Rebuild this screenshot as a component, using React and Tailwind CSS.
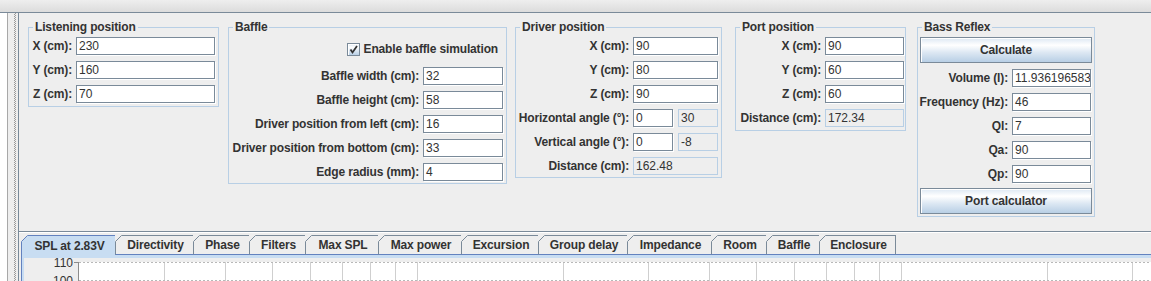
import clsx from 'clsx';

function Label({ children }) {
  return (
    <span className="text-[12px] font-bold tracking-[-0.15px] text-[#333333] whitespace-nowrap leading-[14px]">
      {children}
    </span>
  );
}

function Field({ value, w, ro }) {
  return (
    <div
      className={clsx(
        'h-[18px] shrink-0 flex items-center pl-[2px] overflow-hidden whitespace-nowrap text-[12px] leading-[14px] text-[#333333]',
        ro ? 'bg-[#eeeeee] border border-[#b8cfe5]' : 'bg-white border border-[#7a8a99] shadow-[1px_1px_0_#ffffff]',
        w
      )}
    >
      {value}
    </div>
  );
}

function Row({ label, children }) {
  return (
    <div className="flex items-center justify-end gap-[4px] h-[18px]">
      <Label>{label}</Label>
      {children}
    </div>
  );
}

function Group({ title, className, children }) {
  return (
    <fieldset className={clsx('border border-[#b8cfe5] shrink-0 min-w-0', className)}>
      <legend className="ml-[4px] px-[2px] h-[15px] leading-[15px] text-[12px] font-bold tracking-[-0.15px] text-[#333333] whitespace-nowrap">
        {title}
      </legend>
      {children}
    </fieldset>
  );
}

function Button({ children }) {
  return (
    <div className="h-[26px] flex items-center justify-center border border-[#7a8a99] shadow-[inset_1px_1px_0_#ffffff] bg-[linear-gradient(to_bottom,#dde8f3_0%,#ffffff_30%,#dde8f3_60%,#b8cfe5_100%)] text-[12px] font-bold tracking-[-0.15px] text-[#333333]">
      {children}
    </div>
  );
}

function CheckBox() {
  return (
    <div className="w-[13px] h-[13px] shrink-0 border border-[#7a8a99] shadow-[inset_1px_1px_0_#ffffff] bg-[linear-gradient(to_bottom,#dde8f3_0%,#ffffff_30%,#dde8f3_60%,#b8cfe5_100%)] flex items-center justify-center">
      <svg width="11" height="11" viewBox="0 0 11 11">
        <path d="M2.5 5.5L4.5 8.5L9 2" fill="none" stroke="#333333" strokeWidth="1.8" />
      </svg>
    </div>
  );
}

const TABS = [
  ['SPL at 2.83V', 'w-[94px]'],
  ['Directivity', 'w-[78px]'],
  ['Phase', 'w-[56px]'],
  ['Filters', 'w-[56px]'],
  ['Max SPL', 'w-[73px]'],
  ['Max power', 'w-[83px]'],
  ['Excursion', 'w-[77px]'],
  ['Group delay', 'w-[89px]'],
  ['Impedance', 'w-[84px]'],
  ['Room', 'w-[55px]'],
  ['Baffle', 'w-[53px]'],
  ['Enclosure', 'w-[77px]'],
];

function Tab({ label, w, selected, last }) {
  return (
    <div
      className={clsx(
        'relative shrink-0 h-[20px] flex items-center justify-center pl-[2px] text-[12px] font-bold tracking-[-0.15px] text-[#333333] whitespace-nowrap border-t border-l',
        selected ? 'bg-[#c8ddf2] border-[#6382bf]' : 'bg-[#eeeeee] border-[#7a8a99] border-b border-b-[#6382bf]',
        last && 'border-r',
        w
      )}
    >
      <svg className="absolute -left-px -top-px" width="7" height="7">
        <path d="M0 0H7L0 7Z" fill="#eeeeee" />
        <path d="M0.5 6.5L6.5 0.5" stroke={selected ? '#6382bf' : '#7a8a99'} />
      </svg>
      {label}
    </div>
  );
}

// log frequency grid, 20 Hz sits on the axis
const FREQS = [30, 40, 50, 60, 70, 80, 90, 100, 200, 300, 400, 500, 600, 700, 800, 900, 1000, 2000, 3000];
const fx = (f) => Math.round(55 + 484 * Math.log10(f / 20)) + 0.5;

function Chart() {
  return (
    <svg width="1127" height="23" className="block">
      <rect x="55" y="4" width="1072" height="19" fill="#ffffff" />
      {FREQS.map((f) => (
        <line key={f} x1={fx(f)} x2={fx(f)} y1="4" y2="23" stroke="#cfcfcf" />
      ))}
      <line x1="55" x2="1127" y1="4.5" y2="4.5" stroke="#b8b8b8" strokeDasharray="2 2" />
      <line x1="55" x2="1127" y1="22.5" y2="22.5" stroke="#b8b8b8" strokeDasharray="2 2" />
      <line x1="54.5" x2="54.5" y1="4" y2="23" stroke="#8c8c8c" />
      <line x1="50" x2="54" y1="4.5" y2="4.5" stroke="#8c8c8c" />
      <text x="49" y="9" textAnchor="end" fontSize="12" fill="#333333" fontFamily="Liberation Sans, Arial, sans-serif">
        110
      </text>
      <text x="49" y="27" textAnchor="end" fontSize="12" fill="#333333" fontFamily="Liberation Sans, Arial, sans-serif">
        100
      </text>
    </svg>
  );
}

export default function App() {
  return (
    <div className="w-[1151px] h-[281px] overflow-hidden bg-[#eeeeee] font-['Liberation_Sans',Arial,sans-serif] flex flex-col">
      <div className="h-[12px] shrink-0 bg-linear-to-b from-[#eeeeee] to-[#dcdcdc]" />
      <div className="flex flex-1 min-h-0 border-t border-[#7a8a99]">
        <div className="w-[8px] shrink-0 bg-white border-r border-[#a8a8a8]" />
        <div className="w-[10px] shrink-0 pl-[6px]">
          <div className="w-[2px] h-full bg-[conic-gradient(#9a9a9a_25%,transparent_0_50%,#9a9a9a_0_75%,transparent_0)] bg-[length:2px_2px]" />
        </div>
        <div className="flex-1 min-w-0 flex flex-col border-l border-[#7a8a99]">
          {/* settings panel */}
          <div className="h-[218px] shrink-0 flex items-start pt-[7px] pl-[9px]">
            <Group title="Listening position" className="w-[191px] h-[87px]">
              <div className="flex flex-col gap-[6px] pt-[2px] pr-[3px]">
                <Row label="X (cm):"><Field w="w-[139px]" value="230" /></Row>
                <Row label="Y (cm):"><Field w="w-[139px]" value="160" /></Row>
                <Row label="Z (cm):"><Field w="w-[139px]" value="70" /></Row>
              </div>
            </Group>

            <Group title="Baffle" className="w-[279px] h-[164px] ml-[9px]">
              <div className="flex flex-col pr-[3px]">
                <div className="flex items-center justify-end gap-[4px] h-[18px] mt-[5px] pr-[5px]">
                  <CheckBox />
                  <Label>Enable baffle simulation</Label>
                </div>
                <div className="flex flex-col gap-[6px] mt-[9px]">
                  <Row label="Baffle width (cm):"><Field w="w-[80px]" value="32" /></Row>
                  <Row label="Baffle height (cm):"><Field w="w-[80px]" value="58" /></Row>
                  <Row label="Driver position from left (cm):"><Field w="w-[80px]" value="16" /></Row>
                  <Row label="Driver position from bottom (cm):"><Field w="w-[80px]" value="33" /></Row>
                  <Row label="Edge radius (mm):"><Field w="w-[80px]" value="4" /></Row>
                </div>
              </div>
            </Group>

            <Group title="Driver position" className="w-[207px] h-[158px] ml-[8px]">
              <div className="flex flex-col gap-[6px] pt-[2px] pr-[3px]">
                <Row label="X (cm):"><Field w="w-[85px]" value="90" /></Row>
                <Row label="Y (cm):"><Field w="w-[85px]" value="80" /></Row>
                <Row label="Z (cm):"><Field w="w-[85px]" value="90" /></Row>
                <Row label="Horizontal angle (°):">
                  <div className="flex gap-[5px]">
                    <Field w="w-[40px]" value="0" />
                    <Field w="w-[40px]" value="30" ro />
                  </div>
                </Row>
                <Row label="Vertical angle (°):">
                  <div className="flex gap-[5px]">
                    <Field w="w-[40px]" value="0" />
                    <Field w="w-[40px]" value="-8" ro />
                  </div>
                </Row>
                <Row label="Distance (cm):"><Field w="w-[85px]" value="162.48" ro /></Row>
              </div>
            </Group>

            <Group title="Port position" className="w-[171px] h-[111px] ml-[13px]">
              <div className="flex flex-col gap-[6px] pt-[2px] pr-[1px]">
                <Row label="X (cm):"><Field w="w-[79px]" value="90" /></Row>
                <Row label="Y (cm):"><Field w="w-[79px]" value="60" /></Row>
                <Row label="Z (cm):"><Field w="w-[79px]" value="60" /></Row>
                <Row label="Distance (cm):"><Field w="w-[79px]" value="172.34" ro /></Row>
              </div>
            </Group>

            <Group title="Bass Reflex" className="w-[178px] h-[197px] ml-[11px]">
              <div className="flex flex-col pt-[2px] px-[2px]">
                <Button>Calculate</Button>
                <div className="flex flex-col gap-[6px] mt-[6px] pr-[1px]">
                  <Row label="Volume (l):"><Field w="w-[79px]" value="11.93619658306" /></Row>
                  <Row label="Frequency (Hz):"><Field w="w-[79px]" value="46" /></Row>
                  <Row label="Ql:"><Field w="w-[79px]" value="7" /></Row>
                  <Row label="Qa:"><Field w="w-[79px]" value="90" /></Row>
                  <Row label="Qp:"><Field w="w-[79px]" value="90" /></Row>
                </div>
                <div className="mt-[5px]">
                  <Button>Port calculator</Button>
                </div>
              </div>
            </Group>
          </div>

          {/* graphs */}
          <div className="flex-1 min-h-0 flex flex-col border-t border-[#7a8a99] shadow-[inset_0_1px_0_#ffffff] pt-[3px] pl-[2px]">
            <div className="flex h-[20px] shrink-0">
              {TABS.map(([label, w], i) => (
                <Tab key={label} label={label} w={w} selected={i === 0} last={i === TABS.length - 1} />
              ))}
              <div className="flex-1 border-b border-[#6382bf]" />
            </div>
            <div className="flex-1 min-h-0 flex border-l border-[#6382bf] bg-[#c8ddf2] pt-[3px] pl-[2px]">
              <div className="flex-1 min-w-0 bg-[#eeeeee] overflow-hidden">
                <Chart />
              </div>
            </div>
          </div>
        </div>
      </div>
    </div>
  );
}
